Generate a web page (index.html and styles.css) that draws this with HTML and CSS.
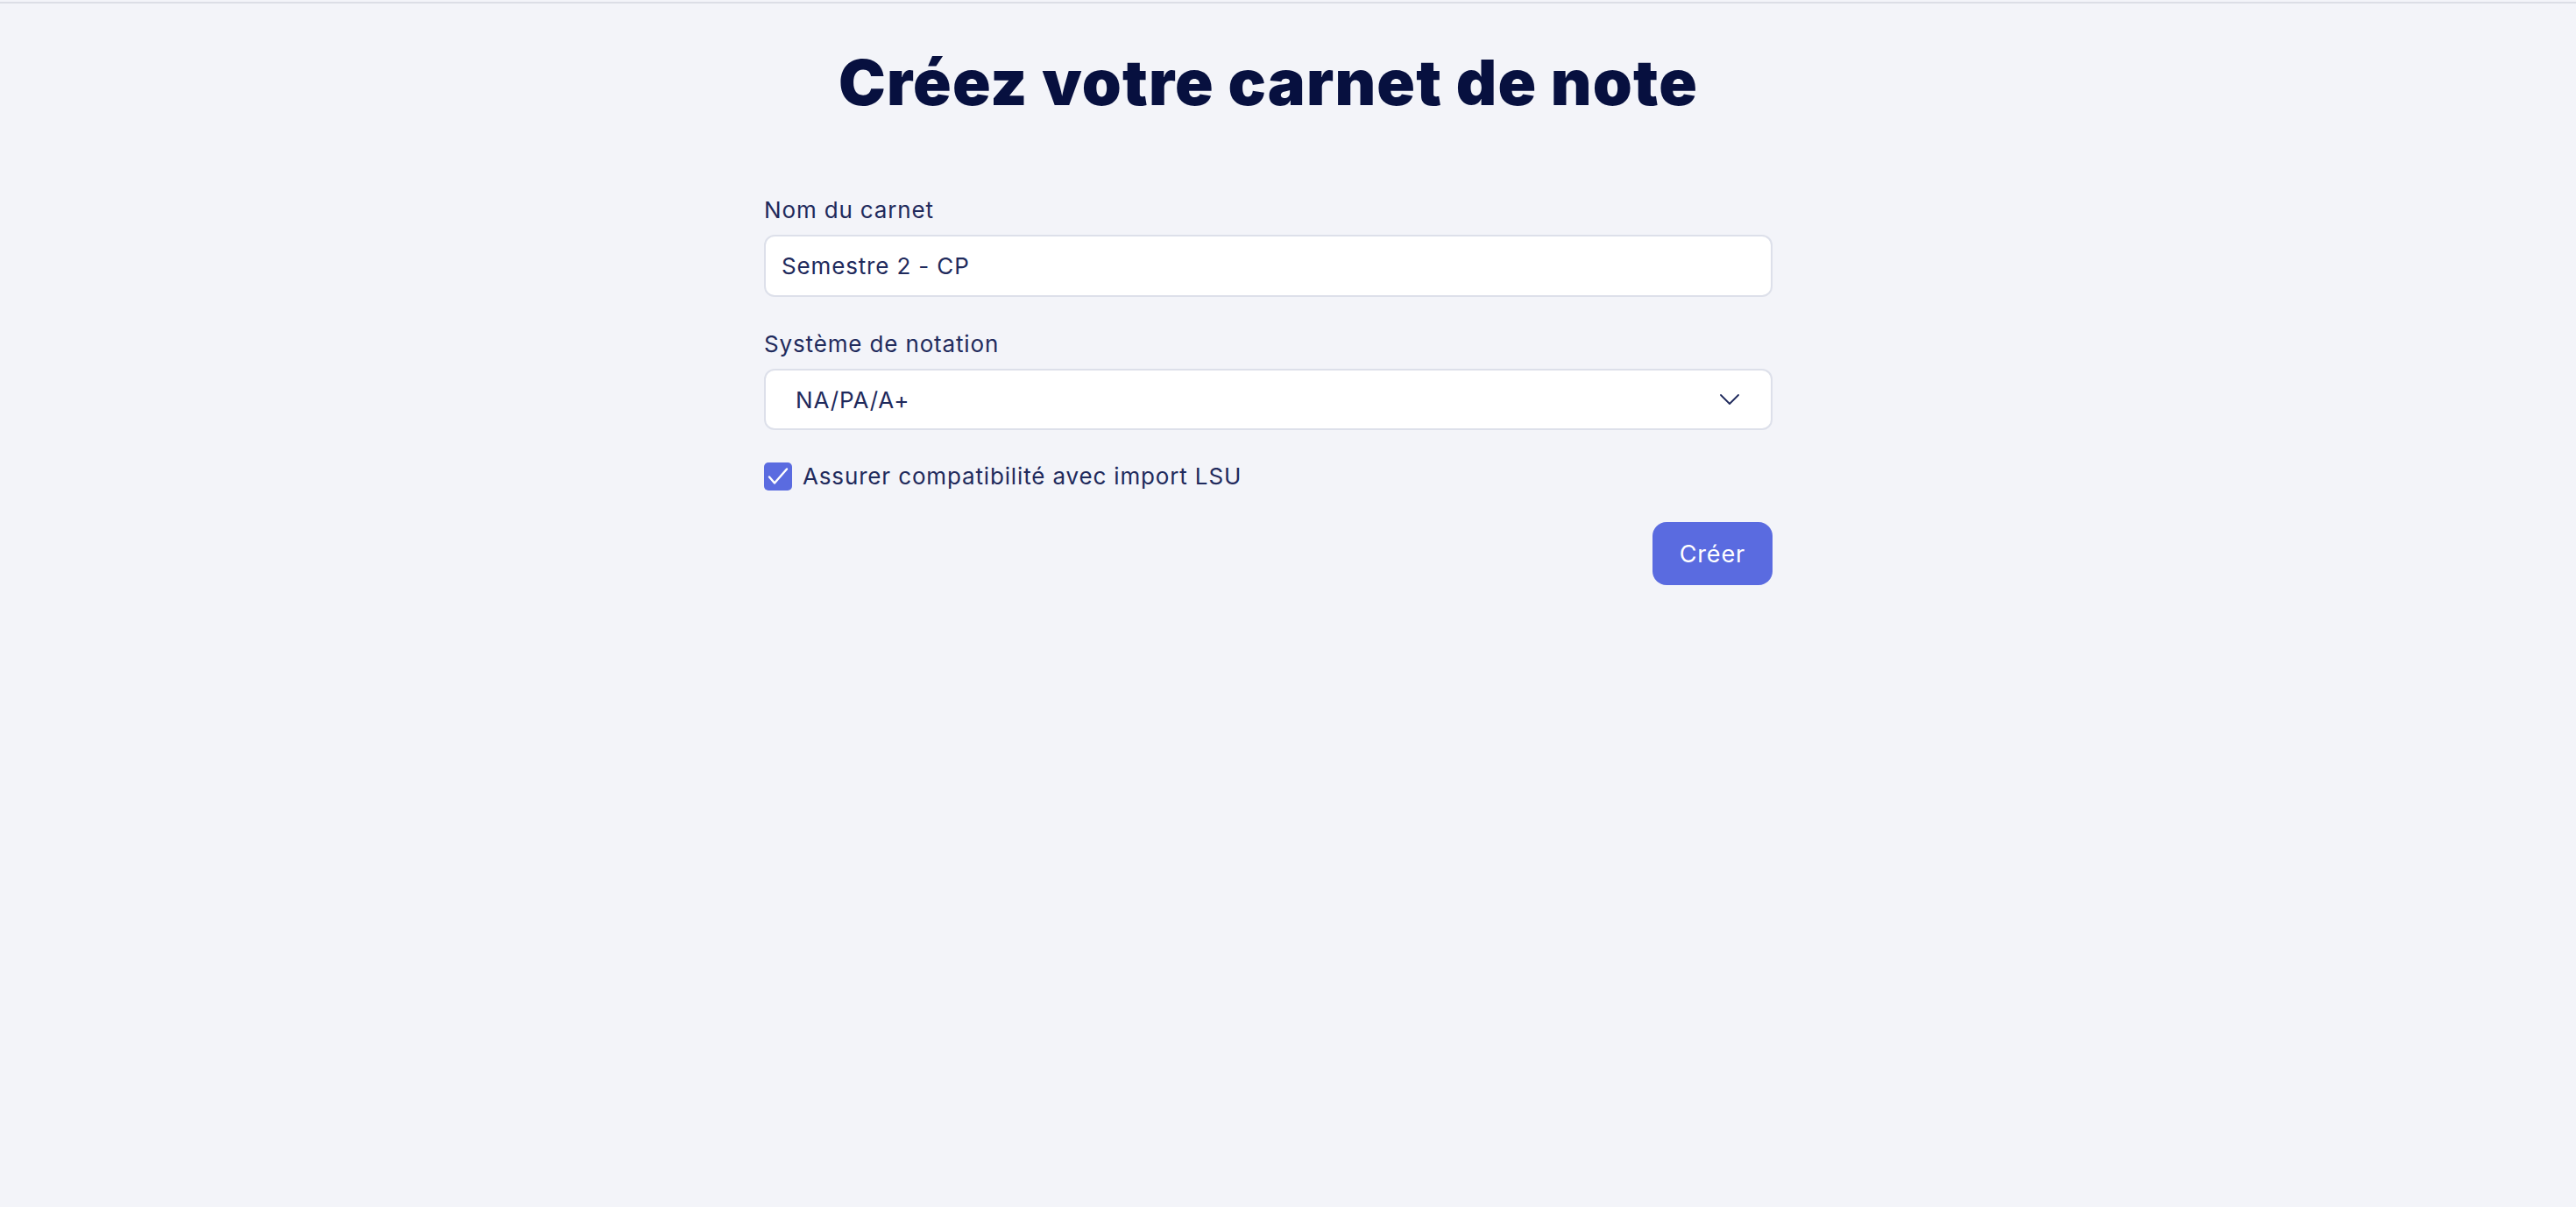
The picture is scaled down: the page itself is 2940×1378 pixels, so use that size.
FILE: index.html
```html
<!DOCTYPE html>
<html lang="fr">
<head>
<meta charset="utf-8">
<title>Créez votre carnet de note</title>
<link rel="stylesheet" href="styles.css">
</head>
<body>
<div class="page">
  <h1 class="title">Créez votre carnet de note</h1>
  <form class="form">
    <div class="field">
      <label class="label" for="nom">Nom du carnet</label>
      <input class="input" id="nom" type="text" value="Semestre 2 - CP">
    </div>
    <div class="field">
      <label class="label" for="sys">Système de notation</label>
      <div class="select">
        <span class="select-value">NA/PA/A+</span>
        <svg class="chevron" width="22" height="12" viewBox="0 0 22 12"><polyline points="1,1 11,11 21,1" fill="none" stroke="#1f2a5c" stroke-width="1.8" stroke-linecap="round" stroke-linejoin="round"/></svg>
      </div>
    </div>
    <div class="check-row">
      <span class="checkbox">
        <svg width="32" height="32" viewBox="0 0 32 32"><polyline points="6,16.5 12,23.5 26,7.5" fill="none" stroke="#ffffff" stroke-width="2.4" stroke-linecap="round" stroke-linejoin="round"/></svg>
      </span>
      <span class="check-label">Assurer compatibilité avec import LSU</span>
    </div>
    <div class="actions">
      <button type="button" class="btn">Créer</button>
    </div>
  </form>
</div>
</body>
</html>
```

FILE: styles.css
```css
html, body {
  margin: 0;
  padding: 0;
  background: #f3f4f9;
}
body {
  padding-top: 2px;
  font-family: "Inter", "Liberation Sans", sans-serif;
  color: #1f2a5c;
}
.page {
  border-top: 2px solid #dcdee6;
  padding-right: 45px;
  min-height: 1370px;
  box-sizing: border-box;
}
.title {
  margin: 47px 0 0;
  font-family: "Inter", "Liberation Sans", sans-serif;
  font-weight: 900;
  font-size: 72px;
  line-height: 86px;
  color: #07103f;
  text-align: center;
  letter-spacing: 1.2px;
}
.form {
  width: 1151px;
  margin: 88px auto 0;
  display: flex;
  flex-direction: column;
  letter-spacing: 0.85px;
}
.field {
  display: flex;
  flex-direction: column;
  margin-bottom: 39px;
}
.field + .field {
  margin-bottom: 37px;
}
.label {
  font-size: 26px;
  line-height: 30px;
  margin-bottom: 13px;
  color: #1f2a5c;
}
.input {
  height: 71px;
  box-sizing: border-box;
  border: 2px solid #dde0ea;
  border-radius: 12px;
  background: #ffffff;
  padding: 0 18px;
  font-family: "Inter", "Liberation Sans", sans-serif;
  font-size: 26px;
  letter-spacing: 0.85px;
  color: #1f2a5c;
  outline: none;
}
.select {
  height: 70px;
  box-sizing: border-box;
  border: 2px solid #dde0ea;
  border-radius: 12px;
  background: #ffffff;
  padding: 0 36px 0 34px;
  display: flex;
  align-items: center;
  justify-content: space-between;
  font-size: 26px;
}
.chevron {
  display: block;
}
.check-row {
  display: flex;
  align-items: center;
  gap: 12px;
  height: 32px;
}
.checkbox {
  width: 32px;
  height: 32px;
  border-radius: 5px;
  background: #5a6be0;
  display: block;
}
.checkbox svg {
  display: block;
}
.check-label {
  font-size: 26px;
  line-height: 30px;
}
.actions {
  display: flex;
  justify-content: flex-end;
  margin-top: 36px;
}
.btn {
  height: 72px;
  padding: 0 31px;
  border: none;
  border-radius: 16px;
  background: #5a6be0;
  color: #ffffff;
  font-family: "Inter", "Liberation Sans", sans-serif;
  font-size: 27px;
  letter-spacing: 0.85px;
  cursor: pointer;
}
```
